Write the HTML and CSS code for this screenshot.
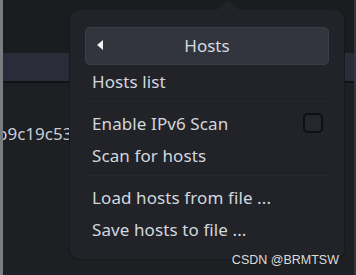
FILE: index.html
```html
<!DOCTYPE html>
<html lang="en">

<head>
  <meta charset="UTF-8">
  <meta name="viewport" content="width=device-width, initial-scale=1.0">
  <title>Hosts menu</title>
  <link rel="stylesheet" href="styles.css">
</head>

<body>
  <div class="app">
    <div class="app-edge"></div>
    <div class="app-main">
      <div class="app-top"></div>
      <div class="app-toolbar"></div>
      <div class="app-content">
        <span class="hash">b9c19c53</span>
      </div>
    </div>
    <div class="app-side"></div>
  </div>

  <div class="popover">
    <button class="popover-title">
      <span class="back-arrow"></span>
      <span>Hosts</span>
    </button>
    <div class="menu-item">Hosts list</div>
    <div class="menu-sep"></div>
    <div class="menu-item menu-check">
      <span>Enable IPv6 Scan</span>
      <span class="check-box"></span>
    </div>
    <div class="menu-item">Scan for hosts</div>
    <div class="menu-sep"></div>
    <div class="menu-item">Load hosts from file ...</div>
    <div class="menu-item">Save hosts to file ...</div>
  </div>

  <div class="watermark">CSDN @BRMTSW</div>
</body>

</html>
```

FILE: styles.css
```css
body {
  margin: 0;
  font-family: 'Noto Sans', sans-serif;
  background-color: #1c1d21;
  overflow: hidden;
}

.app {
  display: flex;
  width: 356px;
  height: 275px;
}

.app-edge {
  width: 3px;
  background-color: #7b7c80;
}

.app-main {
  flex: 1;
  display: flex;
  flex-direction: column;
}

.app-top {
  height: 53px;
  background-color: #1b1c20;
}

.app-toolbar {
  height: 28px;
  background-color: #2a2d39;
  border-bottom: 2px solid #111215;
}

.app-content {
  flex: 1;
  background-color: #1e1f23;
  padding-top: 39px;
  overflow: hidden;
}

.hash {
  display: block;
  margin-left: -6px;
  font-size: 17px;
  color: #c9cdd5;
  line-height: 24px;
}

.app-side {
  width: 2px;
  background-color: #34363d;
}

.popover {
  position: absolute;
  left: 70px;
  top: 10px;
  width: 274px;
  height: 249px;
  box-sizing: border-box;
  padding: 17px 15px 14px;
  background-color: #222328;
  border-radius: 9px;
  box-shadow: 0 0 0 1px #18191c;
}

.popover::before {
  content: '';
  position: absolute;
  left: 146px;
  top: -9px;
  border-left: 12px solid transparent;
  border-right: 12px solid transparent;
  border-bottom: 9px solid #222328;
}

.popover-title {
  display: flex;
  align-items: center;
  justify-content: center;
  position: relative;
  width: 100%;
  height: 38px;
  margin: 0;
  padding: 0 0 2px;
  background-color: #33353e;
  border: 1px solid #3c3e47;
  border-radius: 5px;
  font-family: 'Noto Sans', sans-serif;
  font-size: 17px;
  color: #d6d9e0;
}

.back-arrow {
  position: absolute;
  left: 11px;
  top: 12px;
  border-top: 5px solid transparent;
  border-bottom: 5px solid transparent;
  border-right: 6px solid #f2f2f2;
}

.menu-item {
  display: flex;
  align-items: center;
  justify-content: space-between;
  height: 32px;
  padding: 0 6px 0 7px;
  font-size: 17px;
  letter-spacing: 0.1px;
  color: #d3d7de;
}

.menu-sep {
  height: 1px;
  margin: 4px 0 5px;
  background-color: #27282d;
}

.check-box {
  width: 16px;
  height: 16px;
  border: 2px solid #0f1013;
  border-radius: 5px;
  background-color: #26272d;
}

.watermark {
  position: absolute;
  right: 17px;
  bottom: 8px;
  font-family: 'Liberation Sans', Arial, sans-serif;
  font-size: 12.5px;
  color: #dcdcdc;
}
```
